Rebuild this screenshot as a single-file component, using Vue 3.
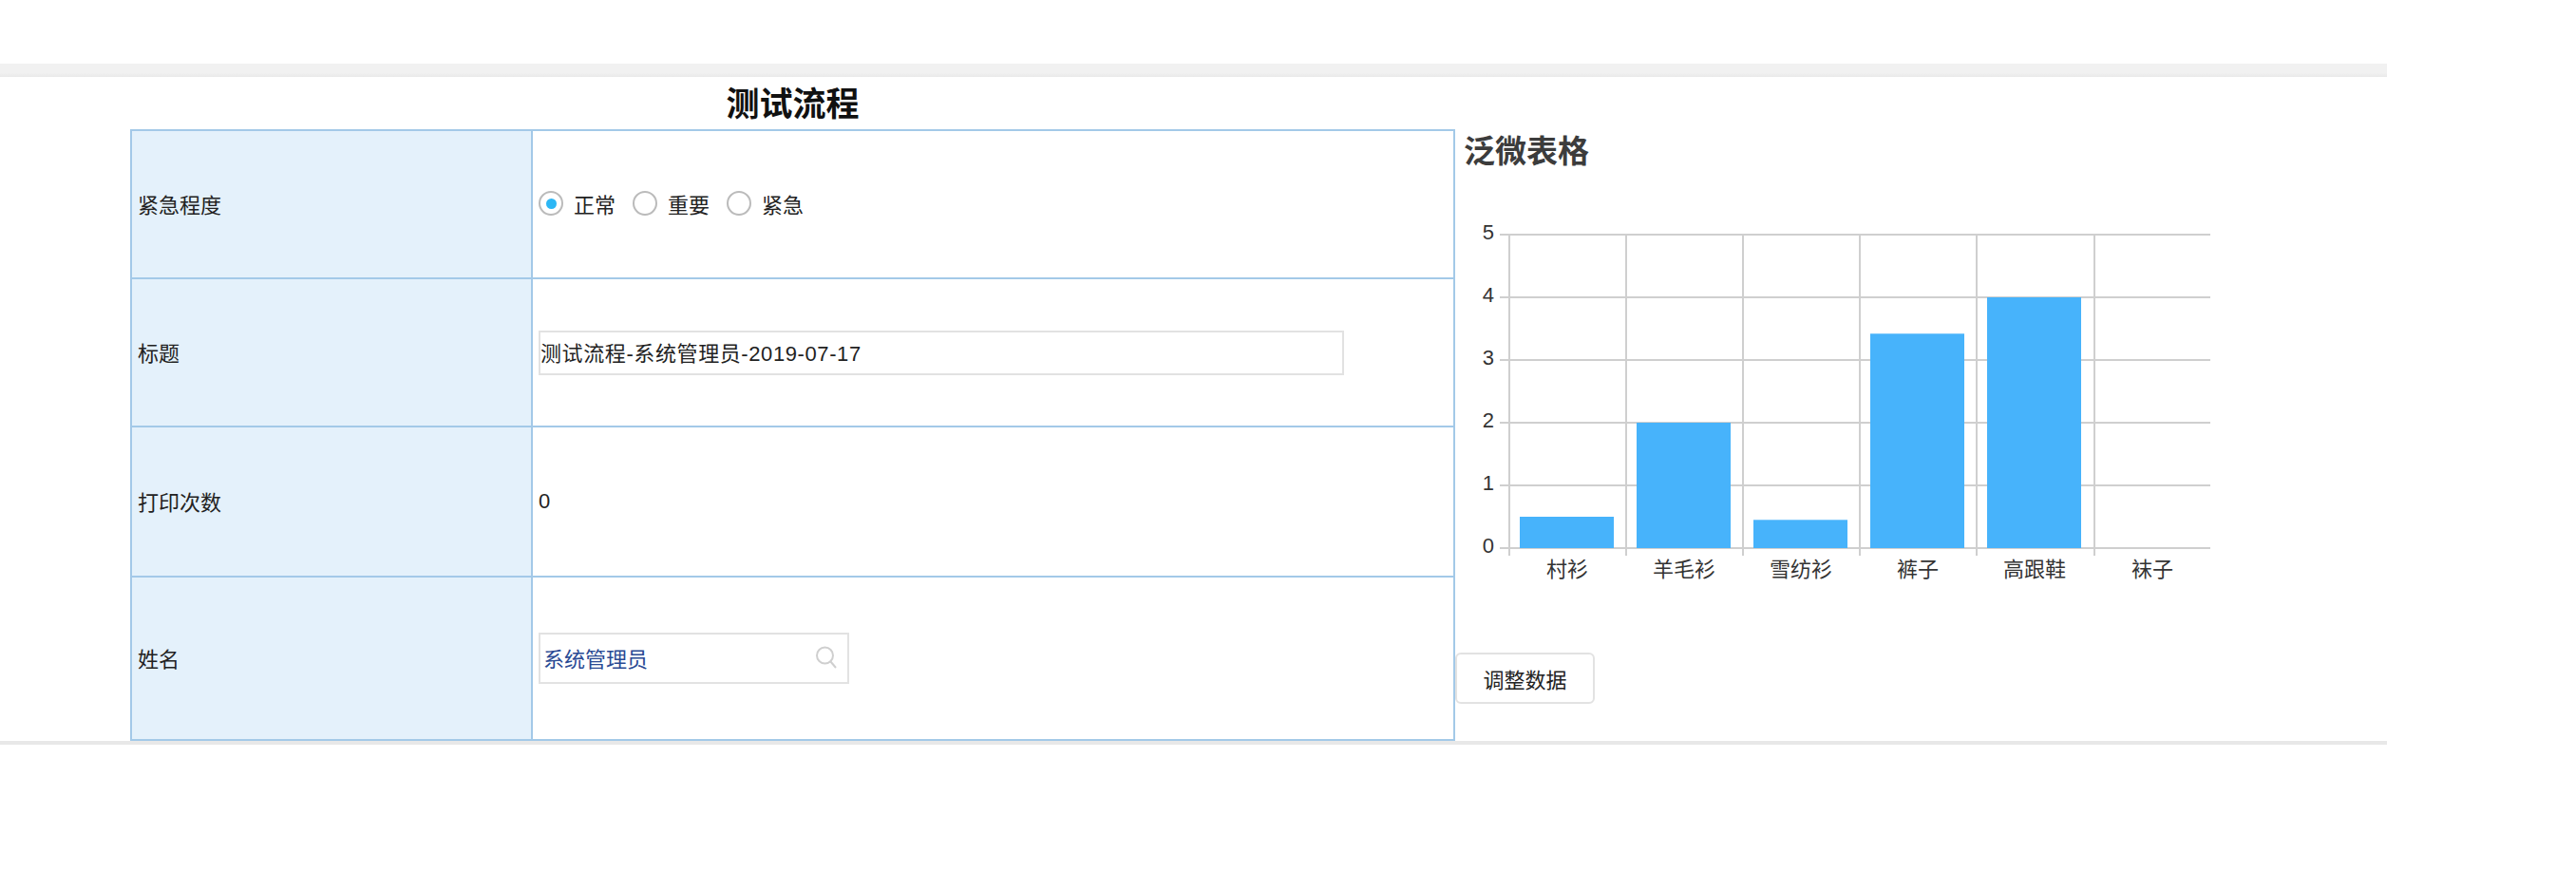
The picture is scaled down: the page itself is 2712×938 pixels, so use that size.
<template>
  <div class="page">
    <div class="top-bar"></div>
    <div class="content">
      <div class="form-side">
        <h1 class="form-title">测试流程</h1>
        <table class="form-table">
          <colgroup>
            <col class="col-label" />
            <col />
          </colgroup>
          <tbody>
            <tr class="row-a">
              <td class="label">紧急程度</td>
              <td class="field">
                <div class="radios">
                  <label v-for="opt in levels" :key="opt" class="radio">
                    <span class="radio-dot" :class="{ checked: opt === level }" @click="level = opt"></span>
                    <span>{{ opt }}</span>
                  </label>
                </div>
              </td>
            </tr>
            <tr class="row-a">
              <td class="label">标题</td>
              <td class="field">
                <input class="title-input" v-model="title" />
              </td>
            </tr>
            <tr class="row-b">
              <td class="label">打印次数</td>
              <td class="field">0</td>
            </tr>
            <tr class="row-c">
              <td class="label">姓名</td>
              <td class="field">
                <div class="picker">
                  <span class="picker-name">系统管理员</span>
                  <svg class="picker-icon" width="24" height="24" viewBox="0 0 24 24" fill="none" stroke="#cfcfcf" stroke-width="2">
                    <circle cx="10.5" cy="10" r="8.5"></circle>
                    <line x1="16.5" y1="16.5" x2="22" y2="23"></line>
                  </svg>
                </div>
              </td>
            </tr>
          </tbody>
        </table>
      </div>

      <div class="chart-side">
        <h2 class="chart-title">泛微表格</h2>
        <svg class="chart" width="800" height="395" viewBox="1532 230 800 395">
          <g stroke="#cfcfcf" stroke-width="2">
            <line v-for="n in 6" :key="'h' + n" x1="1579" x2="2327" :y1="yFor(n - 1)" :y2="yFor(n - 1)"></line>
            <line v-for="x in ticks" :key="'v' + x" :x1="x" :x2="x" y1="247" y2="585"></line>
          </g>
          <rect
            v-for="(item, i) in items"
            :key="item.name"
            :x="ticks[i] + 11"
            :y="yFor(item.value)"
            width="99"
            :height="item.value * 66"
            fill="#47b3fb"
          ></rect>
          <g class="axis-text">
            <text v-for="n in 6" :key="'y' + n" x="1573" text-anchor="end" :y="yFor(n - 1) + 5">{{ n - 1 }}</text>
            <text v-for="(item, i) in items" :key="'c' + i" :x="ticks[i] + 61" text-anchor="middle" y="607">{{ item.name }}</text>
          </g>
        </svg>
        <button class="adjust-btn" @click="adjust">调整数据</button>
      </div>
    </div>
  </div>
</template>

<script setup>
import { ref } from 'vue'

const levels = ['正常', '重要', '紧急']
const level = ref('正常')
const title = ref('测试流程-系统管理员-2019-07-17')

const ticks = [1589, 1712, 1835, 1958, 2081, 2205]
const items = ref([
  { name: '村衫', value: 0.5 },
  { name: '羊毛衫', value: 2 },
  { name: '雪纺衫', value: 0.45 },
  { name: '裤子', value: 3.42 },
  { name: '高跟鞋', value: 4 },
  { name: '袜子', value: 0 }
])

const yFor = (v) => 577 - v * 66

const adjust = () => {
  items.value = items.value.map(i => ({ ...i, value: Math.round(Math.random() * 40) / 10 }))
}
</script>

<style scoped>
.page {
  width: 2513px;
  padding-top: 67px;
  font-family: "Liberation Sans", "Noto Sans CJK SC", sans-serif;
  font-size: 22px;
  color: #222;
}

.top-bar {
  height: 14px;
  background: linear-gradient(to bottom, #f1f1f1, #f1f1f1 70%, #e9e9e9);
}

.content {
  display: flex;
  padding-left: 137px;
  height: 699px;
  border-bottom: 4px solid #e8e8e8;
}

.form-side {
  width: 1395px;
  flex-shrink: 0;
}

.form-title {
  margin: 0;
  height: 55px;
  padding-top: 3px;
  box-sizing: border-box;
  line-height: 52px;
  text-align: center;
  font-size: 35px;
  font-weight: bold;
  color: #111;
}

.form-table {
  width: 100%;
  border-collapse: collapse;
  table-layout: fixed;
  border: 2px solid #a3c9e8;
}

.col-label {
  width: 422px;
}

.form-table td {
  border: 2px solid #a3c9e8;
  padding: 0 6px;
}

.row-a {
  height: 156px;
}

.row-b {
  height: 158px;
}

.row-c {
  height: 172px;
}

.form-table td.label {
  background: #e4f1fb;
  padding-bottom: 3px;
}

.radios {
  display: flex;
  align-items: center;
  gap: 18px;
  padding-bottom: 2px;
}

.radio {
  display: flex;
  align-items: center;
  gap: 11px;
  cursor: pointer;
}

.radio-dot {
  width: 26px;
  height: 26px;
  box-sizing: border-box;
  border: 2px solid #bbb;
  border-radius: 50%;
  display: flex;
  align-items: center;
  justify-content: center;
}

.radio-dot.checked::after {
  content: "";
  width: 11px;
  height: 11px;
  border-radius: 50%;
  background: #2db7f5;
}

.title-input {
  display: block;
  width: 848px;
  height: 47px;
  box-sizing: border-box;
  border: 2px solid #e2e2e2;
  padding: 0 0 2px;
  font: inherit;
  letter-spacing: 0.6px;
  color: inherit;
  outline: none;
}

.picker {
  width: 327px;
  height: 54px;
  box-sizing: border-box;
  border: 2px solid #e2e2e2;
  display: flex;
  align-items: center;
  justify-content: space-between;
  padding: 0 10px 3px 3px;
}

.picker-name {
  color: #2a4a94;
}

.chart-side {
  padding-top: 55px;
}

.chart-title {
  margin: 0 0 46px 9px;
  height: 48px;
  line-height: 48px;
  font-size: 33px;
  font-weight: bold;
  color: #3c3c3c;
}

.chart {
  display: block;
}

.axis-text {
  font-size: 22px;
  fill: #333;
}

.adjust-btn {
  display: block;
  margin: 62px 0 0;
  width: 147px;
  height: 54px;
  box-sizing: border-box;
  border: 2px solid #e2e2e2;
  border-radius: 6px;
  background: #fff;
  font: inherit;
  color: #222;
  cursor: pointer;
}
</style>
